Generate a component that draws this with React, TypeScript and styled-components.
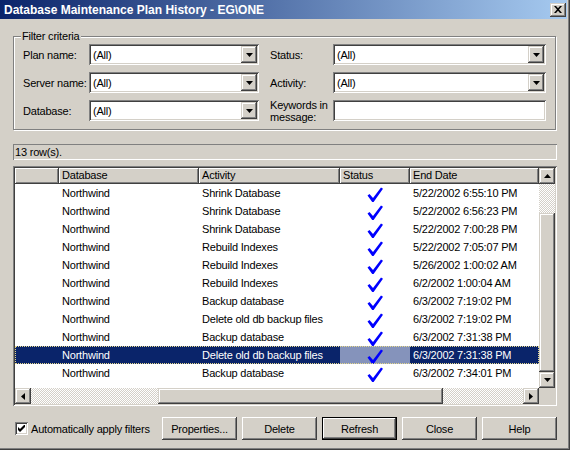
import React from 'react'
import styled, { createGlobalStyle, css } from 'styled-components'

const GlobalStyle = createGlobalStyle`
  html, body {
    margin: 0;
    padding: 0;
    background: #d4d0c8;
  }
  body {
    font-family: "Liberation Sans", Arial, sans-serif;
    font-size: 11px;
    letter-spacing: -0.2px;
    color: #000;
  }
  * {
    box-sizing: border-box;
  }
`

const raised = css`
  box-shadow: inset -1px -1px 0 #404040, inset 1px 1px 0 #ffffff,
    inset -2px -2px 0 #808080, inset 2px 2px 0 #d4d0c8;
`

const raisedSmall = css`
  box-shadow: inset -1px -1px 0 #404040, inset 1px 1px 0 #d4d0c8,
    inset -2px -2px 0 #808080, inset 2px 2px 0 #ffffff;
`

const sunken = css`
  box-shadow: inset 1px 1px 0 #808080, inset -1px -1px 0 #ffffff,
    inset 2px 2px 0 #404040, inset -2px -2px 0 #d4d0c8;
`

const dither = css`
  background: repeating-conic-gradient(#ffffff 0 25%, #d4d0c8 0 50%) 0 0 / 2px 2px;
`

const Window = styled.div`
  width: 570px;
  height: 450px;
  background: #d4d0c8;
  padding-right: 3px;
  display: flex;
  flex-direction: column;
  box-shadow: inset -1px -1px 0 #404040, inset -2px -2px 0 #808080;
`

const TitleBar = styled.div`
  height: 19px;
  display: flex;
  align-items: center;
  justify-content: space-between;
  padding: 0 1px 0 4px;
  background: linear-gradient(to right, #0a246a, #a6caf0);
`

const Title = styled.span`
  color: #fff;
  font-weight: bold;
  font-size: 12px;
  letter-spacing: 0;
  white-space: nowrap;
`

const CaptionButton = styled.div`
  width: 16px;
  height: 14px;
  background: #d4d0c8;
  display: flex;
  align-items: center;
  justify-content: center;
  ${raisedSmall}
`

const Body = styled.div`
  flex: 1;
  display: flex;
  flex-direction: column;
  padding: 17px 10px 0 13px;
`

const GroupBox = styled.div`
  position: relative;
  border: 1px solid #808080;
  box-shadow: inset 1px 1px 0 #fff, 1px 1px 0 #fff;
  padding: 7px 0 8px 9px;
  margin-right: 1px;
`

const Legend = styled.span`
  position: absolute;
  top: -7px;
  left: 7px;
  padding: 0 1px;
  line-height: 13px;
  background: #d4d0c8;
`

const FilterGrid = styled.div`
  display: grid;
  grid-template-columns: 66px 170px 74px 213px;
  grid-auto-rows: 21px;
  row-gap: 7px;
  align-items: center;
`

const Label = styled.div<{ $indent?: boolean }>`
  padding-left: ${(p) => (p.$indent ? '11px' : '0')};
  line-height: 12px;
  white-space: nowrap;
`

const Combo = styled.div`
  height: 21px;
  background: #fff;
  display: flex;
  align-items: center;
  padding: 2px;
  ${sunken}
`

const ComboValue = styled.span`
  flex: 1;
  padding-left: 2px;
`

const DropButton = styled.div`
  width: 16px;
  height: 17px;
  background: #d4d0c8;
  display: flex;
  align-items: center;
  justify-content: center;
  ${raisedSmall}
`

const TextBox = styled.div`
  height: 21px;
  background: #fff;
  ${sunken}
`

const StatusBox = styled.div`
  margin-top: 14px;
  height: 16px;
  line-height: 16px;
  padding-left: 2px;
  box-shadow: inset 1px 1px 0 #808080, inset -1px -1px 0 #ffffff;
`

const GridFrame = styled.div`
  margin-top: 6px;
  height: 240px;
  padding: 2px;
  display: grid;
  grid-template-columns: 1fr 16px;
  grid-template-rows: 1fr 16px;
  ${sunken}
`

const TableArea = styled.div`
  background: #fff;
  display: flex;
  flex-direction: column;
  overflow: hidden;
`

const columns = '44px 140px 141px 70px 1fr'

const HeaderRow = styled.div`
  display: grid;
  grid-template-columns: ${columns};
  height: 16px;
`

const HeaderCell = styled.div`
  background: #d4d0c8;
  padding: 0 3px;
  line-height: 15px;
  white-space: nowrap;
  overflow: hidden;
  ${raised}
`

const Row = styled.div<{ $selected?: boolean }>`
  display: grid;
  grid-template-columns: ${columns};
  height: 18px;
  align-items: center;
  background: ${(p) => (p.$selected ? '#0a246a' : '#fff')};
  color: ${(p) => (p.$selected ? '#fff' : '#000')};
  outline: ${(p) => (p.$selected ? '1px dotted #e6d88c' : 'none')};
  outline-offset: -1px;
`

const Cell = styled.div`
  padding-left: 3px;
  white-space: nowrap;
  overflow: hidden;
`

const StatusCell = styled.div<{ $selected?: boolean }>`
  align-self: stretch;
  display: flex;
  justify-content: center;
  padding-top: 3px;
  background: ${(p) => (p.$selected ? '#8593bb' : 'transparent')};
`

const VScroll = styled.div`
  display: flex;
  flex-direction: column;
`

const HScroll = styled.div`
  display: flex;
`

const ScrollButton = styled.div`
  width: 16px;
  height: 16px;
  flex: none;
  background: #d4d0c8;
  display: flex;
  align-items: center;
  justify-content: center;
  ${raisedSmall}
`

const Track = styled.div<{ $size?: number }>`
  ${dither}
  flex: ${(p) => (p.$size ? `0 0 ${p.$size}px` : '1')};
`

const Thumb = styled.div<{ $size?: number }>`
  background: #d4d0c8;
  flex: ${(p) => (p.$size ? `0 0 ${p.$size}px` : '1')};
  ${raisedSmall}
`

const Corner = styled.div`
  background: #d4d0c8;
`

const Footer = styled.div`
  margin-top: 11px;
  display: flex;
  align-items: center;
  gap: 5px;
`

const CheckLabel = styled.label`
  flex: 1;
  display: flex;
  align-items: center;
  gap: 3px;
  padding-left: 2px;
  white-space: nowrap;
`

const CheckBox = styled.span`
  width: 13px;
  height: 13px;
  background: #fff;
  display: flex;
  align-items: center;
  justify-content: center;
  ${sunken}
`

const Button = styled.button<{ $default?: boolean }>`
  width: 75px;
  height: 23px;
  background: #d4d0c8;
  border: ${(p) => (p.$default ? '1px solid #000' : 'none')};
  padding: 0;
  font: inherit;
  letter-spacing: inherit;
  color: #000;
  ${raised}
`

const Arrow = ({ dir }: { dir: 'up' | 'down' | 'left' | 'right' }) => {
  const pts = {
    down: '0,0 7,0 3.5,4',
    up: '0,4 7,4 3.5,0',
    left: '4,0 4,7 0,3.5',
    right: '0,0 0,7 4,3.5',
  }[dir]
  const vertical = dir === 'up' || dir === 'down'
  return (
    <svg width={vertical ? 7 : 4} height={vertical ? 4 : 7} viewBox={vertical ? '0 0 7 4' : '0 0 4 7'}>
      <polygon points={pts} fill="#000" />
    </svg>
  )
}

const BlueCheck = () => (
  <svg width="16" height="15" viewBox="0 0 16 15">
    <path d="M0.5 8.5 L2.5 7 L6 11 L14 0.5 L16 1.8 L6.6 15 L5.2 15 Z" fill="#0000ff" />
  </svg>
)

const rows = [
  ['Shrink Database', '5/22/2002 6:55:10 PM'],
  ['Shrink Database', '5/22/2002 6:56:23 PM'],
  ['Shrink Database', '5/22/2002 7:00:28 PM'],
  ['Rebuild Indexes', '5/22/2002 7:05:07 PM'],
  ['Rebuild Indexes', '5/26/2002 1:00:02 AM'],
  ['Rebuild Indexes', '6/2/2002 1:00:04 AM'],
  ['Backup database', '6/3/2002 7:19:02 PM'],
  ['Delete old db backup files', '6/3/2002 7:19:02 PM'],
  ['Backup database', '6/3/2002 7:31:38 PM'],
  ['Delete old db backup files', '6/3/2002 7:31:38 PM'],
  ['Backup database', '6/3/2002 7:34:01 PM'],
]

const SELECTED = 9

function ComboBox() {
  return (
    <Combo>
      <ComboValue>(All)</ComboValue>
      <DropButton>
        <Arrow dir="down" />
      </DropButton>
    </Combo>
  )
}

export default function App() {
  return (
    <Window>
      <GlobalStyle />
      <TitleBar>
        <Title>Database Maintenance Plan History - EG\ONE</Title>
        <CaptionButton>
          <svg width="8" height="7" viewBox="0 0 8 7">
            <path d="M0 0 H2 L4 2.3 L6 0 H8 L5 3.5 L8 7 H6 L4 4.7 L2 7 H0 L3 3.5 Z" fill="#000" />
          </svg>
        </CaptionButton>
      </TitleBar>
      <Body>
        <GroupBox>
          <Legend>Filter criteria</Legend>
          <FilterGrid>
            <Label>Plan name:</Label>
            <ComboBox />
            <Label $indent>Status:</Label>
            <ComboBox />
            <Label>Server name:</Label>
            <ComboBox />
            <Label $indent>Activity:</Label>
            <ComboBox />
            <Label>Database:</Label>
            <ComboBox />
            <Label $indent>
              Keywords in
              <br />
              message:
            </Label>
            <TextBox />
          </FilterGrid>
        </GroupBox>

        <StatusBox>13 row(s).</StatusBox>

        <GridFrame>
          <TableArea>
            <HeaderRow>
              <HeaderCell />
              <HeaderCell>Database</HeaderCell>
              <HeaderCell>Activity</HeaderCell>
              <HeaderCell>Status</HeaderCell>
              <HeaderCell>End Date</HeaderCell>
            </HeaderRow>
            {rows.map(([activity, date], i) => (
              <Row key={i} $selected={i === SELECTED}>
                <Cell />
                <Cell>Northwind</Cell>
                <Cell>{activity}</Cell>
                <StatusCell $selected={i === SELECTED}>
                  <BlueCheck />
                </StatusCell>
                <Cell>{date}</Cell>
              </Row>
            ))}
          </TableArea>
          <VScroll>
            <ScrollButton>
              <Arrow dir="up" />
            </ScrollButton>
            <Track $size={29} />
            <Thumb />
            <ScrollButton>
              <Arrow dir="down" />
            </ScrollButton>
          </VScroll>
          <HScroll>
            <ScrollButton>
              <Arrow dir="left" />
            </ScrollButton>
            <Track $size={127} />
            <Thumb $size={285} />
            <Track />
            <ScrollButton>
              <Arrow dir="right" />
            </ScrollButton>
          </HScroll>
          <Corner />
        </GridFrame>

        <Footer>
          <CheckLabel>
            <CheckBox>
              <svg width="7" height="7" viewBox="0 0 7 7">
                <polygon points="0,2 2,4 7,-1 7,2 2,7 0,5" fill="#000" />
              </svg>
            </CheckBox>
            Automatically apply filters
          </CheckLabel>
          <Button>Properties...</Button>
          <Button>Delete</Button>
          <Button $default>Refresh</Button>
          <Button>Close</Button>
          <Button>Help</Button>
        </Footer>
      </Body>
    </Window>
  )
}
